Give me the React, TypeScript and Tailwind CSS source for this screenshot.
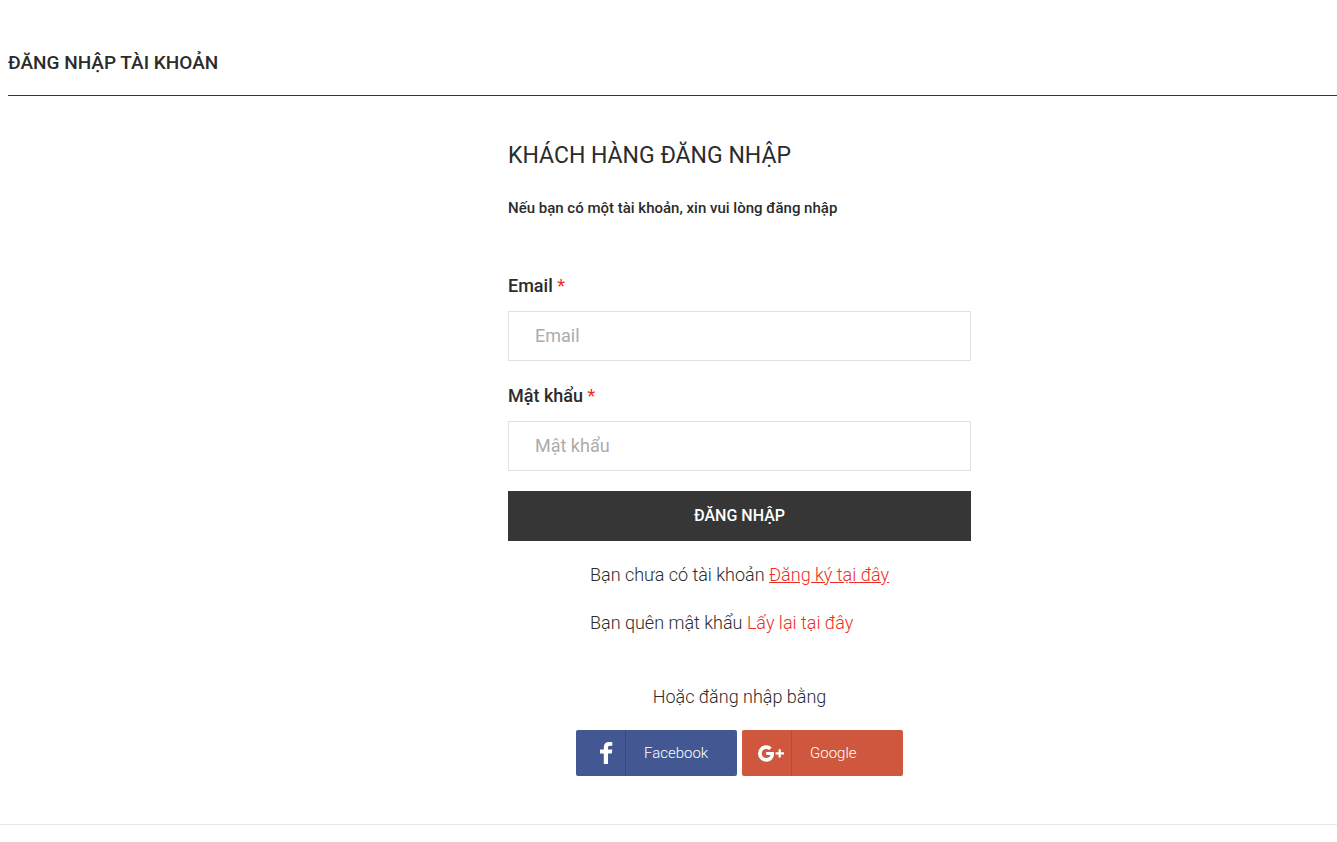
import type { ReactNode } from "react";

type FieldProps = {
  id: string;
  label: string;
  type: string;
};

function Field({ id, label, type }: FieldProps) {
  return (
    <div className="mb-5">
      <label htmlFor={id} className="block pb-[10px] text-[18px] leading-[30px] font-medium">
        {label} <span className="font-normal text-[#ee2d24]">*</span>
      </label>
      <input
        id={id}
        name={id}
        type={type}
        placeholder={label}
        required
        className="block h-[50px] w-full border border-[#e1e1e1] bg-white px-[26px] pb-0.5 text-[18px] outline-none placeholder:text-[#acacac] focus:border-[#363636]"
      />
    </div>
  );
}

type SocialButtonProps = {
  name: string;
  className: string;
  iconClassName: string;
  children: ReactNode;
};

function SocialButton({ name, className, iconClassName, children }: SocialButtonProps) {
  return (
    <button
      type="button"
      className={`flex h-[46px] w-[161px] cursor-pointer items-center rounded-xs text-left text-[15px] font-light text-white ${className}`}
    >
      <span className={`flex h-full w-[50px] items-center border-r ${iconClassName}`}>{children}</span>
      <span className="pl-[18px]">{name}</span>
    </button>
  );
}

export default function App() {
  return (
    <div className="border-b border-[#e8e8e8] bg-white pb-12 font-['Roboto',sans-serif] text-[18px] leading-6 text-[#2b2b2b]">
      <header className="ml-2 border-b border-[#363636] pt-[51px] pb-5">
        <h1 className="text-[19px] leading-6 font-medium uppercase">Đăng nhập tài khoản</h1>
      </header>

      <main className="flex justify-center pt-11 md:pl-[142px]">
        <div className="w-full max-w-[463px]">
          <h2 className="text-[23px] leading-8 font-normal uppercase">Khách hàng đăng nhập</h2>
          <p className="pt-6 pb-[51px] text-[15px] leading-6 font-medium">
            Nếu bạn có một tài khoản, xin vui lòng đăng nhập
          </p>

          <form onSubmit={(event) => event.preventDefault()}>
            <Field id="email" label="Email" type="email" />
            <Field id="password" label="Mật khẩu" type="password" />
            <button
              type="submit"
              className="block h-[50px] w-full cursor-pointer bg-[#363636] text-[16px] font-medium text-white uppercase"
            >
              Đăng nhập
            </button>
          </form>

          <div className="flex justify-center pt-[22px] font-light">
            <div>
              <p>
                Bạn chưa có tài khoản{" "}
                <a href="#register" className="text-[#ee2d24] underline">
                  Đăng ký tại đây
                </a>
              </p>
              <p className="pt-6">
                Bạn quên mật khẩu{" "}
                <a href="#recover" className="text-[#ee2d24]">
                  Lấy lại tại đây
                </a>
              </p>
            </div>
          </div>

          <p className="pt-[50px] text-center font-light">Hoặc đăng nhập bằng</p>
          <div className="flex justify-center gap-[5px] pt-[21px]">
            <SocialButton name="Facebook" className="bg-[#435892]" iconClassName="border-[#314a8a] pl-6">
              <svg width="13" height="22" viewBox="0 0 13 22" fill="#fff" aria-hidden="true">
                <path d="M3.8 22V11.4H0V7.6h3.8V5.1C3.8 1.8 5.8 0 9 0c1.4 0 2.5.1 3.3.2v3.6h-2.2c-1.7 0-2.1.8-2.1 2v1.8h4.3l-.5 3.8H8V22z" />
              </svg>
            </SocialButton>
            <SocialButton name="Google" className="bg-[#cf573e]" iconClassName="border-[#bd4a34] pl-4">
              <svg width="26" height="17" viewBox="0 0 26 17" aria-hidden="true">
                <path
                  d="M8.2 6.9v3.2h4.3c-.5 1.9-2.1 3-4.2 3a4.6 4.6 0 0 1 0-9.2c1.2 0 2.2.4 3 1.1l2.4-2.4A8.1 8.1 0 0 0 8.2.3a8.2 8.2 0 1 0 0 16.4c4.7 0 7.8-3.3 7.8-8 0-.6-.1-1.2-.2-1.8z"
                  fill="#fff"
                />
                <path d="M20.6 4.2h2.2v3.1H26v2.2h-3.2v3.1h-2.2V9.5h-3V7.3h3z" fill="#fff" />
              </svg>
            </SocialButton>
          </div>
        </div>
      </main>
    </div>
  );
}
